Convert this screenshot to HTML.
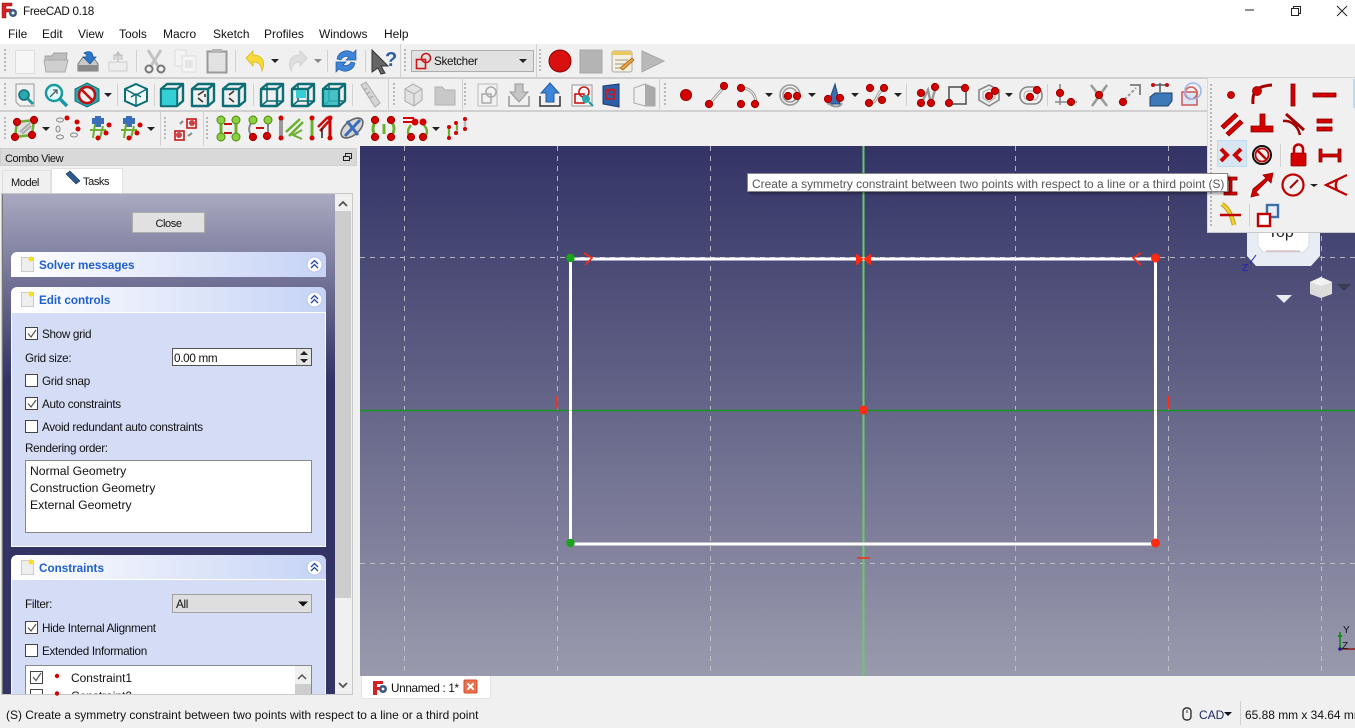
<!DOCTYPE html>
<html><head><meta charset="utf-8"><title>FreeCAD 0.18</title>
<style>
html,body{margin:0;padding:0;width:1355px;height:728px;overflow:hidden;background:#f0f0f0;position:relative;font-family:"Liberation Sans",sans-serif;}
.a{position:absolute;box-sizing:border-box}
.t{position:absolute;white-space:nowrap;font:11.95px/16px "Liberation Sans",sans-serif;color:#111;margin-top:1px}
.s{font-size:11.7px;letter-spacing:-.31px}
.x{font-size:11px;letter-spacing:-.4px}
.h{position:absolute;white-space:nowrap;font:bold 11.7px/16px "Liberation Sans",sans-serif;color:#1f5fd0;margin-top:1px}
.cb{position:absolute;width:13px;height:13px;background:#fff;border:1px solid #444;box-sizing:border-box}
.hd{position:absolute;left:11px;width:315px;height:25px;border-radius:6px 6px 0 0;background:linear-gradient(90deg,#fff 0%,#c6d3f6 100%)}
svg{position:absolute;overflow:visible}
</style></head><body>
<div class="a" style="left:0;top:0;width:1355px;height:44px;background:#fff"></div>
<div class="t s" style="left:23px;top:3px">FreeCAD 0.18</div>
<div class="t" style="left:8px;top:25px">File</div>
<div class="t" style="left:42px;top:25px">Edit</div>
<div class="t" style="left:78px;top:25px">View</div>
<div class="t" style="left:119px;top:25px">Tools</div>
<div class="t" style="left:163px;top:25px">Macro</div>
<div class="t" style="left:213px;top:25px">Sketch</div>
<div class="t" style="left:264px;top:25px">Profiles</div>
<div class="t" style="left:319px;top:25px">Windows</div>
<div class="t" style="left:384px;top:25px">Help</div>

<div class="a" style="left:0;top:77px;width:1355px;height:2px;background:#d0d0d0"></div>
<div class="a" style="left:0;top:110px;width:1207px;height:2px;background:#d0d0d0"></div>

<!-- viewport -->
<div class="a" style="left:360px;top:146px;width:995px;height:530px;background:linear-gradient(180deg,#333366 0%,#9a9aae 100%)"></div>

<svg style="left:0;top:0" width="1355" height="728" viewBox="0 0 1355 728">
<defs>
<g id="rd"><circle r="3.6" fill="#d40000" stroke="#9a0000" stroke-width="1"/></g>
<path id="dn" d="M-4,-2H4L0,2Z" fill="#222"/>
<g id="dots"><path d="M0,0V24" stroke="#b8b8b8" stroke-width="2" stroke-dasharray="2 2"/></g>
<g id="cube" fill="none" stroke="#0e6e76" stroke-width="2.4" stroke-linejoin="round"><path d="M-11,-6L-5,-11H11V6L5,11H-11Z"/><path d="M-11,-6H5V11M5,-6L11,-11"/></g>
<path id="cubeb" d="M-5,-11H11V6M-5,-11V6H11M-5,6L-11,11" fill="none" stroke="#0e6e76" stroke-width="1.6"/>
</defs>

<!-- app icon -->
<g><path d="M2,3H12V6H6V9H11V12H6V18H2Z" fill="#d42020" stroke="#901010" stroke-width=".5"/><circle cx="13" cy="13" r="4" fill="#3a5a80"/><circle cx="13" cy="13" r="1.5" fill="#fff"/></g>

<!-- window buttons -->
<path d="M1245,10H1254" stroke="#222" stroke-width="1"/>
<path d="M1291.5,8.5H1298.5V15.5H1291.5ZM1293.5,8.5V6.5H1300.5V13.5H1298.5" fill="none" stroke="#222"/>
<path d="M1337,6L1347,16M1347,6L1337,16" stroke="#222" stroke-width="1"/>

<!-- toolbar handles -->
<use href="#dots" x="5" y="49"/><use href="#dots" x="5" y="83"/><use href="#dots" x="5" y="117"/>
<use href="#dots" x="405" y="49"/><use href="#dots" x="540" y="49"/><use href="#dots" x="394" y="83"/><use href="#dots" x="465" y="83"/><use href="#dots" x="665" y="83"/><use href="#dots" x="165" y="117"/><use href="#dots" x="207" y="117"/>
<!-- separators -->
<g stroke="#d0d0d0" stroke-width="1">
<path d="M136.5,50V72M235.5,50V72M327.5,50V72M365.5,50V72M400.5,44V77M536.5,44V77"/>
<path d="M117.5,84V106M154.5,84V106M253.5,84V106M352.5,84V106M388.5,78V110M462.5,78V110M659.5,78V110"/>
<path d="M160.5,112V146M203.5,112V146"/>
<path d="M906.5,84V106M1047.5,84V106"/>
<path d="M1207.5,78V232"/>
</g>

<!-- ROW 1 -->
<rect x="15.5" y="50.5" width="19" height="23" rx="1" fill="#f6f6f6" stroke="#dcdcdc"/>
<path d="M45,56H52L54,53H67L65,72H46Z" fill="#bdbdbd" stroke="#a0a0a0"/><path d="M44,60H68L65,72H46Z" fill="#cfcfcf" stroke="#aaa"/>
<path d="M78,64L83,57H93L98,64V71H78Z" fill="#c9c9c9" stroke="#777"/><rect x="78" y="65" width="20" height="6" fill="#8a8a8a"/><path d="M84,53C89,50 93,52 93,57H96L90,64L83,57H87C87,55 86,54 84,53Z" fill="#2d76c9" stroke="#1a4f90" stroke-width=".7"/>
<path d="M109,62H127V71H109Z" fill="#ededed" stroke="#ccc"/><path d="M114,60V55H122V60M118,62V53M115,56L118,52L121,56" fill="#dcdcdc" stroke="#bbb"/>
<path d="M148,50L158,66M161,50L151,66" stroke="#c2c2c2" stroke-width="3"/><circle cx="149" cy="69" r="3.5" fill="none" stroke="#777" stroke-width="2"/><circle cx="161" cy="69" r="3.5" fill="none" stroke="#777" stroke-width="2"/>
<path d="M175,50H186V66H175Z" fill="#f4f4f4" stroke="#ddd"/><path d="M182,56H196V72H182Z" fill="#f4f4f4" stroke="#ddd"/><rect x="185" y="60" width="8" height="8" fill="#e4e4e4"/>
<rect x="207.5" y="51.5" width="19" height="21" fill="#e2e2e2" stroke="#999" stroke-width="2"/><rect x="212" y="49" width="10" height="4" fill="#b5b5b5"/>
<path d="M246,58L253,51V55C262,55 266,61 262,71C261,64 258,62 253,62V66Z" fill="#f6da3a" stroke="#d8b820" stroke-width=".8"/>
<use href="#dn" x="275" y="61"/>
<path d="M307,58L300,51V55C291,55 287,61 291,71C292,64 295,62 300,62V66Z" fill="#dedede" stroke="#ccc" stroke-width=".8"/>
<use href="#dn" x="318" y="61" style="opacity:.5"/>
<path d="M337,59A10,10 0 0 1 353,53L356,50V60H346L349,57A6,6 0 0 0 341,60Z" fill="#3c85d8" stroke="#215a9e" stroke-width=".7"/><path d="M355,63A10,10 0 0 1 339,69L336,72V62H346L343,65A6,6 0 0 0 351,62Z" fill="#3c85d8" stroke="#215a9e" stroke-width=".7"/>
<path d="M372,50L388,66L381,66L385,73L381,74L378,68L372,72Z" fill="#666" stroke="#333"/><text x="385" y="66" font-family="Liberation Sans" font-size="20" font-weight="bold" fill="#2d5f9e">?</text>

<rect x="411.5" y="50.5" width="122" height="21" fill="#e1e1e1" stroke="#adadad"/>
<rect x="416.5" y="59.5" width="9" height="9" fill="none" stroke="#c81818" stroke-width="1.6"/><circle cx="426" cy="58" r="4.5" fill="none" stroke="#c81818" stroke-width="1.6"/>
<use href="#dn" x="523" y="61"/>

<circle cx="560" cy="61" r="11" fill="#d81010" stroke="#8a0000"/>
<rect x="580" y="50" width="22" height="23" fill="#b4b4b4" stroke="#a8a8a8"/>
<rect x="612" y="51" width="20" height="21" rx="2" fill="#f4f0dc" stroke="#aaa"/><rect x="612" y="51" width="20" height="4" fill="#e8c860"/><path d="M615,60H628M615,64H625M615,68H622" stroke="#999"/><path d="M620,68L632,58L634,60L623,70Z" fill="#e8a040" stroke="#a06010" stroke-width=".7"/>
<path d="M642,51L664,61L642,72Z" fill="#b9b9b9" stroke="#a8a8a8"/>

<!-- ROW 2 -->
<path d="M16,84H34V106H20L16,102Z" fill="#f2f2f2" stroke="#999"/><circle cx="24" cy="95" r="5" fill="#2aa8b0" stroke="#0e6e76" stroke-width="1.5"/><path d="M28,99L33,104" stroke="#1a9aa0" stroke-width="3"/>
<circle cx="54" cy="93" r="8" fill="#dff" stroke="#1a9aa0" stroke-width="2.5"/><path d="M50,97L57,90M53,90H57V94" fill="none" stroke="#555" stroke-width="1.3"/><path d="M60,99L67,106" stroke="#1a9aa0" stroke-width="3.5"/>
<path d="M87,83L99,89V101L87,107L75,101V89Z" fill="#2aa8b0" stroke="#0e6e76"/><circle cx="87" cy="95" r="8" fill="#f0f0f0" stroke="#c01010" stroke-width="2.6"/><path d="M82,90L92,100" stroke="#c01010" stroke-width="2.6"/>
<use href="#dn" x="108" y="95"/>
<path d="M136,84L147,89V101L136,106L125,101V89Z" fill="#f0f8f8" stroke="#0e6e76" stroke-width="2"/><path d="M125,89L136,95L147,89M136,95V106M131,97L136,94L141,97" fill="none" stroke="#0e6e76" stroke-width="1.5"/>
<use href="#cube" x="172" y="95"/><path d="M-11,-6H5V11H-11Z" transform="translate(172,95)" fill="#33cfd4"/><path d="M-11,-6H5V11H-11Z" transform="translate(172,95)" fill="none" stroke="#0e6e76" stroke-width="1.6"/>
<use href="#cube" x="203" y="95"/><path d="M198,95L204,91M198,98L203,102M205,97V94" stroke="#333" stroke-width="1.6"/>
<use href="#cube" x="234" y="95"/><path d="M229,95L234,91M229,98L234,102" stroke="#333" stroke-width="1.6"/>
<use href="#cube" x="272" y="95"/><use href="#cubeb" x="272" y="95"/>
<use href="#cube" x="303" y="95"/><use href="#cubeb" x="303" y="95"/><rect x="296" y="90" width="10" height="8" fill="#33cfd4"/>
<use href="#cube" x="334" y="95"/><use href="#cubeb" x="334" y="95"/><rect x="324" y="90" width="14" height="15" fill="#2ab8be" opacity=".85"/>
<path d="M361,85L366,82L380,103L375,107Z" fill="#d6d6d6" stroke="#aaa"/><path d="M364,90L367,88M367,94L370,92M370,98L373,96" stroke="#999"/>
<path d="M405,89L413,84L422,89V100L414,106L405,101Z" fill="#e2e2e2" stroke="#aaa"/><path d="M405,89L414,94V106M414,94L422,89" fill="none" stroke="#aaa"/>
<path d="M435,87H442L445,90H455V105H435Z" fill="#c8c8c8" stroke="#b0b0b0"/>
<path d="M478,84H497V106H478Z" fill="#f2f2f2" stroke="#bbb"/><rect x="482" y="94" width="9" height="9" fill="none" stroke="#aaa" stroke-width="1.5"/><circle cx="491" cy="92" r="5" fill="none" stroke="#aaa" stroke-width="1.5"/>
<path d="M509,96V106H529V96" fill="none" stroke="#999" stroke-width="1.5"/><path d="M515,84H523V92H528L519,102L510,92H515Z" fill="#c4c4c4" stroke="#999"/>
<path d="M540,96V106H560V96" fill="none" stroke="#333" stroke-width="1.5"/><path d="M546,102H554V93H559L550,83L541,93H546Z" fill="#3c85d8" stroke="#215a9e"/>
<rect x="572" y="85" width="20" height="21" fill="#f6f6f6" stroke="#999"/><rect x="575" y="94" width="9" height="9" fill="none" stroke="#c81818" stroke-width="1.6"/><circle cx="584" cy="92" r="5" fill="none" stroke="#c81818" stroke-width="1.6"/><circle cx="586" cy="99" r="4" fill="#2aa8b0"/><path d="M589,102L593,106" stroke="#1a9aa0" stroke-width="2"/>
<path d="M603,86L619,84V107L603,104Z" fill="#2d5fa8" stroke="#1a3a70"/><rect x="606" y="90" width="8" height="9" fill="none" stroke="#c81818" stroke-width="1.6"/><circle cx="612" cy="92" r="3" fill="none" stroke="#c81818" stroke-width="1.3"/>
<path d="M634,88L645,84L655,88V106L645,106L634,103Z" fill="#f0f0f0" stroke="#aaa"/><path d="M645,84L655,88V106H645Z" fill="#aaa"/>

<!-- sketch tools -->
<circle cx="686" cy="95" r="5.5" fill="#d40000" stroke="#9a0000"/>
<path d="M709,104L725,86" stroke="#999" stroke-width="3"/><path d="M709,104L725,86" stroke="#f4f4f4" stroke-width="1"/><use href="#rd" x="709" y="104"/><use href="#rd" x="724" y="86"/>
<path d="M741,88C752,88 756,96 756,104" fill="none" stroke="#999" stroke-width="3"/><path d="M741,88C752,88 756,96 756,104" fill="none" stroke="#f4f4f4"/><use href="#rd" x="741" y="88"/><use href="#rd" x="741" y="104"/><use href="#rd" x="755" y="104"/><use href="#dn" x="769" y="95"/>
<circle cx="790" cy="95" r="10" fill="none" stroke="#999" stroke-width="1.6"/><circle cx="790" cy="95" r="7" fill="none" stroke="#999" stroke-width="1.6"/><use href="#rd" x="788" y="96"/><use href="#rd" x="797" y="96"/><use href="#dn" x="812" y="95"/>
<path d="M828,104L835,84L840,104Z" fill="#3a6eb0" stroke="#1f4478"/><path d="M826,101C832,108 840,108 842,103" fill="none" stroke="#999" stroke-width="2"/><use href="#rd" x="828" y="99"/><use href="#rd" x="840" y="98"/><use href="#dn" x="855" y="95"/>
<path d="M870,103C878,103 876,92 884,89" fill="none" stroke="#999" stroke-width="3"/><path d="M870,103C878,103 876,92 884,89" fill="none" stroke="#f4f4f4"/><use href="#rd" x="870" y="88"/><use href="#rd" x="884" y="88"/><use href="#rd" x="869" y="103"/><use href="#rd" x="882" y="100"/><use href="#dn" x="898" y="95"/>
<path d="M921,104L928,90L931,104L936,86" fill="none" stroke="#999" stroke-width="2.5"/><use href="#rd" x="921" y="103"/><use href="#rd" x="921" y="93"/><use href="#rd" x="931" y="103"/><use href="#rd" x="935" y="87"/>
<rect x="949" y="87" width="17" height="17" fill="none" stroke="#555" stroke-width="1.6"/><use href="#rd" x="949" y="103"/><use href="#rd" x="965" y="88"/>
<path d="M989,85L999,90V100L989,106L979,100V90Z" fill="none" stroke="#888" stroke-width="1.6"/><path d="M989,89L995,92V98L989,102L983,98V92Z" fill="none" stroke="#aaa"/><use href="#rd" x="995" y="91"/><use href="#rd" x="989" y="96"/><use href="#dn" x="1009" y="95"/>
<rect x="1020" y="87" width="22" height="17" rx="8" fill="none" stroke="#888" stroke-width="1.6"/><rect x="1024" y="91" width="14" height="9" rx="4" fill="none" stroke="#aaa"/><use href="#rd" x="1030" y="97"/><use href="#rd" x="1037" y="90"/>
<path d="M1060,84V105M1055,102H1077" stroke="#888" stroke-width="1.6" fill="none"/><use href="#rd" x="1060" y="93"/><use href="#rd" x="1071" y="102"/>
<path d="M1091,85L1107,106M1107,85L1092,106" stroke="#999" stroke-width="2.5"/><use href="#rd" x="1099" y="95"/>
<path d="M1121,103L1136,88" stroke="#999" stroke-width="2" stroke-dasharray="3 2"/><path d="M1130,85H1140V95" fill="none" stroke="#888" stroke-width="2"/><use href="#rd" x="1123" y="102"/>
<path d="M1150,97L1155,93H1172V101L1168,106H1150Z" fill="#3d78b8" stroke="#1d3f6e"/><path d="M1160,83V92" stroke="#555" stroke-width="1.5"/><path d="M1153,85H1167" stroke="#555" stroke-width="1.5"/><circle cx="1153" cy="85" r="2" fill="#c01010"/><circle cx="1167" cy="85" r="2" fill="#c01010"/>
<rect x="1182" y="92" width="15" height="13" fill="#dde6f4" stroke="#d06060" stroke-width="1.6"/><circle cx="1191" cy="93" r="6" fill="none" stroke="#d06060" stroke-width="1.6"/><circle cx="1193" cy="91" r="8" fill="none" stroke="#9db9e8" stroke-width="1.6"/>

<!-- ROW 3 -->
<path d="M17,122L34,120L32,135L15,137Z" fill="#e0e0e0" stroke="#6cb030" stroke-width="2.5"/><path d="M20,132L30,123M22,134L31,126" stroke="#aaa" stroke-width="2"/><use href="#rd" x="15" y="137"/><use href="#rd" x="17" y="122"/><use href="#rd" x="34" y="120"/><use href="#rd" x="32" y="135"/>
<use href="#dn" x="46" y="129"/>
<g fill="#eee" stroke="#888"><ellipse cx="60" cy="120" rx="3.5" ry="2"/><ellipse cx="60" cy="137" rx="3.5" ry="2"/><ellipse cx="74" cy="135" rx="3.5" ry="2"/><ellipse cx="58" cy="129" rx="2" ry="3"/></g><g fill="#d40000"><circle cx="67" cy="118" r="2.5"/><circle cx="77" cy="122" r="2.5"/><circle cx="78" cy="129" r="2.5"/></g>
<path d="M92,121H104" stroke="#3a6eb8" stroke-width="6"/><path d="M98,116V127" stroke="#3a6eb8" stroke-width="6"/><path d="M90,130H106M95,124L93,138M103,126L100,138" stroke="#6cb030" stroke-width="2"/><circle cx="109" cy="125" r="2.5" fill="#d40000"/><circle cx="106" cy="133" r="2.5" fill="#d40000"/><circle cx="98" cy="138" r="2.5" fill="#d40000"/>
<path d="M123,121H135" stroke="#3a6eb8" stroke-width="6"/><path d="M129,116V127" stroke="#3a6eb8" stroke-width="6"/><path d="M121,130H137M126,124L124,138M134,126L131,138" stroke="#6cb030" stroke-width="2"/><circle cx="140" cy="125" r="2.5" fill="#d40000"/><circle cx="137" cy="133" r="2.5" fill="#d40000"/><circle cx="129" cy="138" r="2.5" fill="#d40000"/>
<use href="#dn" x="151" y="129"/>
<rect x="175" y="131" width="9" height="9" fill="none" stroke="#c81818" stroke-width="1.6"/><rect x="187" y="119" width="9" height="9" fill="none" stroke="#c81818" stroke-width="1.6"/><circle cx="179" cy="135" r="3" fill="#d04040"/><circle cx="192" cy="123" r="3" fill="#d04040"/><path d="M180,124L183,121M188,136L192,133" stroke="#888" stroke-width="2"/>

<path d="M221,120V137M236,120V137" stroke="#6cb030" stroke-width="3"/><path d="M224,124H232M224,133H232" stroke="#c01010" stroke-width="2"/><circle cx="221" cy="120" r="4" fill="#8ad040" stroke="#4f8a10"/><circle cx="236" cy="120" r="4" fill="#8ad040" stroke="#4f8a10"/><circle cx="221" cy="137" r="4" fill="#8ad040" stroke="#4f8a10"/><circle cx="236" cy="137" r="4" fill="#8ad040" stroke="#4f8a10"/>
<path d="M253,120C248,127 248,131 252,137M268,120V137" fill="none" stroke="#888" stroke-width="2"/><path d="M256,128H264" stroke="#c01010" stroke-width="2"/><circle cx="253" cy="120" r="4" fill="#8ad040" stroke="#4f8a10"/><circle cx="268" cy="120" r="4" fill="#8ad040" stroke="#4f8a10"/><use href="#rd" x="253" y="137"/><use href="#rd" x="267" y="136"/>
<path d="M281,118V139" stroke="#999" stroke-width="4"/><path d="M286,132L300,119M289,136L303,122" stroke="#6cb030" stroke-width="2.5"/><path d="M302,130L293,135L302,139" fill="none" stroke="#6cb030" stroke-width="2"/><circle cx="281" cy="118" r="2.5" fill="#d40000"/><circle cx="281" cy="138" r="2.5" fill="#d40000"/>
<path d="M312,118V138" stroke="#6cb030" stroke-width="3"/><path d="M330,118V138" stroke="#d40000" stroke-width="3"/><path d="M318,127L328,117M320,131L329,121" stroke="#c01010" stroke-width="2.5"/><path d="M322,128V138" stroke="#222" stroke-width="1.5"/><circle cx="312" cy="118" r="2.5" fill="#d40000"/><circle cx="312" cy="138" r="2.5" fill="#d40000"/><circle cx="330" cy="118" r="2.5" fill="#d40000"/><circle cx="330" cy="138" r="2.5" fill="#d40000"/>
<ellipse cx="352" cy="128" rx="13" ry="7" transform="rotate(-40 352 128)" fill="#d8d8d8" stroke="#666" stroke-width="1.6"/><path d="M345,136L360,120M347,121L358,135" stroke="#3a6eb8" stroke-width="3"/>
<path d="M376,120C372,127 372,131 376,137M391,120C395,127 395,131 391,137" fill="none" stroke="#6cb030" stroke-width="3"/><path d="M384,124V134" stroke="#6cb030" stroke-width="3"/><use href="#rd" x="375" y="120"/><use href="#rd" x="375" y="137"/><use href="#rd" x="391" y="120"/><use href="#rd" x="391" y="137"/>
<path d="M403,118H414M403,122H414" stroke="#d40000" stroke-width="2"/><path d="M411,125C407,130 407,134 411,138M424,125C428,130 428,134 424,138" fill="none" stroke="#6cb030" stroke-width="2.5"/><use href="#rd" x="411" y="137"/><use href="#rd" x="423" y="137"/><circle cx="415" cy="122" r="3.5" fill="#d40000"/><circle cx="423" cy="122" r="3.5" fill="#d40000"/>
<use href="#dn" x="436" y="129"/>
<path d="M449,128V138M457,125V134M465,120V130" stroke="#bbb" stroke-width="2.5"/><path d="M449,128V138M457,125V130" stroke="#6cb030" stroke-width="2"/><g fill="#d40000"><circle cx="449" cy="127" r="2"/><circle cx="449" cy="138" r="2"/><circle cx="456" cy="123" r="2"/><circle cx="456" cy="133" r="2"/><circle cx="465" cy="119" r="2"/><circle cx="465" cy="129" r="2"/></g>

<!-- 3D scene -->
<g stroke="#c8c8cc" stroke-width="1" stroke-dasharray="5 5" opacity=".85">
<path d="M404.5,146V676M557.5,146V676M710.5,146V676M1015.5,146V676M1168.5,146V676M1321.5,146V676"/>
<path d="M360,257.500H1355M360,563.500H1355"/>
</g>
<path d="M360,410.500H1355" stroke="#15951f" stroke-width="1.5"/>
<path d="M863.500,146V676" stroke="#66cc66" stroke-width="2"/>
<rect x="570.500" y="259" width="585" height="285" fill="none" stroke="#fff" stroke-width="3"/>
<circle cx="570.500" cy="258" r="4.200" fill="#19a519"/><circle cx="570.500" cy="543" r="4.200" fill="#19a519"/>
<g fill="#ff2a10"><circle cx="1155.500" cy="258" r="4.500"/><circle cx="1155.500" cy="543" r="4.500"/><circle cx="863.500" cy="410" r="4.500"/></g>
<g fill="none" stroke="#ff2a10" stroke-width="1.600">
<path d="M584,253L592,258L585,265M1141,253L1133,258L1141,265"/>
<path d="M557,396V409M1168.500,396V409M857,558H870"/>
</g>
<path d="M857,254L861,259L857,265L856,265V254ZM870,254L866,259L870,265L871,265V254Z" fill="#ff2a10"/>
<path d="M858,256L862,259L858,263M869,256L865,259L869,263" fill="none" stroke="#ff2a10" stroke-width="2"/>

<!-- nav cube -->
<path d="M1247,232H1320V256L1311,266H1256L1247,256Z" fill="#e8ecf3"/>
<path d="M1258,232V246L1263,252H1304L1309,246V232Z" fill="#fff" stroke="#d8dce4"/>
<path d="M1266,251H1300" stroke="#d4a8a8"/>
<text x="1268" y="237" font-family="Liberation Sans" font-size="16" fill="#222">Top</text>
<path d="M1250,263L1256,255" stroke="#2020c8"/><text x="1242" y="271" font-family="Liberation Sans" font-size="10" fill="#2020c8">Z</text>
<path d="M1310,282L1321,277L1332,282V294L1321,298L1310,294Z" fill="#dcdcdc"/><path d="M1310,282L1321,286L1332,282L1321,277Z" fill="#f2f2f2"/>
<path d="M1276,295H1292L1284,303Z" fill="#e8ecf3"/>
<path d="M1337,284H1351L1344,291Z" fill="#3a3a52"/>

<!-- axis cross -->
<path d="M1340,649V632" stroke="#148a14" stroke-width="1.600"/><path d="M1338,636H1342" stroke="#148a14" stroke-width="2"/><path d="M1340,649H1355" stroke="#8a2020" stroke-width="1.600"/><circle cx="1340" cy="649" r="1.800" fill="#1a1a8a"/>
<text x="1343" y="633" font-family="Liberation Sans" font-size="10" fill="#111">Y</text><text x="1342" y="649" font-family="Liberation Sans" font-size="10" fill="#111">Z</text>
</svg>

<div class="t s" style="left:434px;top:53px">Sketcher</div>

<!-- palette -->
<div class="a" style="left:1207px;top:78px;width:148px;height:155px;background:#f0f0f0;border-left:1px solid #d8d8d8;border-bottom:1px solid #c8c8c8"></div>
<div class="a" style="left:1217px;top:140px;width:30px;height:27px;background:#d8e6f2;border:1px solid #bcdcf4"></div>
<div class="a" style="left:1353px;top:79px;width:2px;height:29px;background:#bcdcf4"></div>
<svg style="left:0;top:0" width="1355" height="728" viewBox="0 0 1355 728">
<path d="M1211,84V226" stroke="#b8b8b8" stroke-width="2" stroke-dasharray="2 2"/>
<path d="M1280.500,144V167M1249.500,204V226" stroke="#d0d0d0"/>
<g fill="#d40000" stroke="#8a0000" stroke-width=".8">
<circle cx="1231" cy="95" r="3.500"/>
<path d="M1253,104C1252,92 1256,86 1272,85" fill="none" stroke="#a00000" stroke-width="3"/><circle cx="1257" cy="91" r="4.500"/>
<rect x="1291" y="84" width="4" height="22"/>
<rect x="1313" y="93" width="23" height="4"/>
<path d="M1221,126L1235,113L1238,116L1224,129ZM1226,133L1240,120L1243,123L1229,136Z"/>
<path d="M1260,114H1265V126H1273V132H1251V126H1260Z"/>
<path d="M1283,121C1291,120 1298,126 1300,135" fill="none" stroke="#a00000" stroke-width="2.500"/><path d="M1286,114L1304,130" stroke="#a00000" stroke-width="3" fill="none"/>
<rect x="1317" y="119" width="15" height="4"/><rect x="1317" y="127" width="15" height="4"/>
<rect x="1291" y="153" width="15" height="13" rx="1"/><path d="M1294,153V149A4.500,4.500 0 0 1 1303,149V153" fill="none" stroke="#c00000" stroke-width="2.500"/>
<path d="M1319,149H1322V154H1338V149H1341V162H1338V157H1322V162H1319Z"/>
<path d="M1224,177H1237V180H1232V192H1237V195H1224V192H1229V180H1224Z"/>
<path d="M1251,197L1253,189L1266,178L1263,175L1273,173L1271,183L1268,180L1256,192L1259,195Z"/>
</g>
<path d="M1221,149L1227,155L1221,161M1241,149L1235,155L1241,161" fill="none" stroke="#c80000" stroke-width="4"/>
<circle cx="1262" cy="155" r="9" fill="#f0f0f0" stroke="#111" stroke-width="2"/><circle cx="1262" cy="155" r="6.500" fill="#f0f0f0" stroke="#c00000" stroke-width="1.800"/><path d="M1257,150L1267,160" stroke="#c00000" stroke-width="2.500"/>
<circle cx="1293" cy="185" r="10.500" fill="none" stroke="#c00000" stroke-width="2.200"/><path d="M1290,188L1298,180" stroke="#a00000" stroke-width="2"/>
<path d="M1310,184H1318L1314,187Z" fill="#222"/>
<path d="M1347,175L1326,185L1347,195M1338,179C1335,184 1335,187 1338,191" fill="none" stroke="#c00000" stroke-width="2.200"/>
<path d="M1222,204C1228,208 1232,216 1234,225" fill="none" stroke="#c0a010" stroke-width="4.500"/><path d="M1222,204C1228,208 1232,216 1234,225" fill="none" stroke="#f2d230" stroke-width="2.500"/><path d="M1220,215H1241" stroke="#c00000" stroke-width="2.500"/>
<rect x="1267" y="205" width="11" height="12" fill="#e8eef8" stroke="#3d6ea8" stroke-width="2.400"/><rect x="1258" y="214" width="12" height="12" fill="#fff" stroke="#c00000" stroke-width="2.400"/>
</svg>

<!-- tooltip -->
<div class="a" style="left:747px;top:173px;width:481px;height:19px;background:#fff;border:1px solid #888;box-shadow:2px 2px 2px rgba(0,0,0,.35)"></div>
<div class="t" style="left:752px;top:175px;color:#555">Create a symmetry constraint between two points with respect to a line or a third point (S)</div>

<!-- combo view -->
<div class="a" style="left:0;top:148px;width:357px;height:18px;background:#d9d9d9;border:1px solid #cfcfcf"></div>
<div class="t x" style="left:5px;top:150px">Combo View</div>
<svg style="left:0;top:0" width="360" height="200" viewBox="0 0 360 200"><path d="M343.500,156.500H349.500V160.500H343.500ZM345.500,156.500V153.500H351.500V158.500H349.500" fill="none" stroke="#222"/>
</svg>
<div class="a" style="left:2px;top:170px;width:49px;height:23px;background:#f0f0f0;border:1px solid #e0e0e0;border-bottom:none"></div>
<div class="t x" style="left:11px;top:174px">Model</div>
<div class="a" style="left:51px;top:168px;width:72px;height:25px;background:#fff;border:1px solid #e0e0e0;border-bottom:none"></div>
<svg style="left:0;top:0" width="130" height="200" viewBox="0 0 130 200"><path d="M66,174L70,171L80,181L76,184Z" fill="#2d5a90" stroke="#1a3a60" stroke-width=".6"/></svg>
<div class="t x" style="left:83px;top:173px">Tasks</div>

<div class="a" style="left:1px;top:193px;width:352px;height:502px;background:#f6f6f6;border:1px solid #c8c8c8"></div>
<div class="a" style="left:2px;top:194px;width:333px;height:500px;border-left:1px solid #777;background:linear-gradient(180deg,#a9a9c0 0,#333366 186px,#333366 100%)"></div>

<!-- scrollbar -->
<div class="a" style="left:335px;top:194px;width:17px;height:500px;background:#f0f0f0"></div>
<div class="a" style="left:335px;top:211px;width:16px;height:387px;background:#cdcdcd"></div>
<svg style="left:0;top:0" width="360" height="700" viewBox="0 0 360 700"><path d="M339,206L343,202L347,206M339,683L343,687L347,683" fill="none" stroke="#555" stroke-width="1.800"/></svg>

<!-- Close -->
<div class="a" style="left:132px;top:212px;width:73px;height:21px;background:#e1e1e1;border:1px solid #adadad"></div>
<div class="t x" style="left:132px;top:215px;width:73px;text-align:center">Close</div>

<!-- solver -->
<div class="hd" style="top:252px"></div>
<div class="h" style="left:39px;top:257px">Solver messages</div>
<!-- edit controls -->
<div class="hd" style="top:287px"></div>
<div class="a" style="left:11px;top:312px;width:315px;height:235px;background:#d5dcf6;border:1px solid #fff"></div>
<div class="h" style="left:39px;top:292px">Edit controls</div>
<!-- constraints -->
<div class="hd" style="top:555px"></div>
<div class="a" style="left:11px;top:579px;width:315px;height:115px;background:#d5dcf6;border-left:1px solid #fff;border-right:1px solid #fff;border-top:1px solid #fff"></div>
<div class="h" style="left:39px;top:560px">Constraints</div>

<svg style="left:0;top:0" width="360" height="700" viewBox="0 0 360 700">
<rect x="21.500" y="257.500" width="12" height="14" fill="#eee" stroke="#ccc"/><circle cx="31" cy="259" r="2.500" fill="#f4e020"/>
<rect x="21.500" y="292.500" width="12" height="14" fill="#eee" stroke="#ccc"/><circle cx="31" cy="294" r="2.500" fill="#f4e020"/>
<rect x="21.500" y="560.500" width="12" height="14" fill="#eee" stroke="#ccc"/><circle cx="31" cy="562" r="2.500" fill="#f4e020"/>
<g fill="#fff" stroke="#b8c4e4"><circle cx="314.500" cy="264.500" r="7.500"/><circle cx="314.500" cy="299.500" r="7.500"/><circle cx="314.500" cy="567.500" r="7.500"/></g>
<g fill="none" stroke="#1f45a8" stroke-width="1.300"><path d="M311,264L314.500,260.500L318,264M311,268L314.500,264.500L318,268"/><path d="M311,299L314.500,295.500L318,299M311,303L314.500,299.500L318,303"/><path d="M311,567L314.500,563.500L318,567M311,571L314.500,567.500L318,571"/></g>
</svg>

<div class="cb" style="left:25px;top:327px"></div><div class="t s" style="left:42px;top:326px">Show grid</div>
<div class="t s" style="left:25px;top:350px">Grid size:</div>
<div class="a" style="left:172px;top:348px;width:140px;height:18px;background:#fff;border:1px solid #555"></div>
<div class="t s" style="left:174px;top:350px">0.00 mm</div>
<div class="a" style="left:296px;top:349px;width:15px;height:16px;background:#e4e4e4;border-left:1px solid #ccc"></div>
<div class="cb" style="left:25px;top:374px"></div><div class="t s" style="left:42px;top:373px">Grid snap</div>
<div class="cb" style="left:25px;top:397px"></div><div class="t s" style="left:42px;top:396px">Auto constraints</div>
<div class="cb" style="left:25px;top:420px"></div><div class="t s" style="left:42px;top:419px">Avoid redundant auto constraints</div>
<div class="t s" style="left:25px;top:440px">Rendering order:</div>
<div class="a" style="left:25px;top:460px;width:287px;height:73px;background:#fff;border:1px solid #888"></div>
<div class="t" style="left:30px;top:462px;font-size:12.2px">Normal Geometry</div>
<div class="t" style="left:30px;top:479px;font-size:12.2px">Construction Geometry</div>
<div class="t" style="left:30px;top:496px;font-size:12.2px">External Geometry</div>

<div class="t s" style="left:25px;top:596px">Filter:</div>
<div class="a" style="left:172px;top:594px;width:140px;height:19px;background:#dedede;border:1px solid #a0a0a0"></div>
<div class="t s" style="left:176px;top:596px">All</div>
<div class="cb" style="left:25px;top:621px"></div><div class="t s" style="left:42px;top:620px">Hide Internal Alignment</div>
<div class="cb" style="left:25px;top:644px"></div><div class="t s" style="left:42px;top:643px">Extended Information</div>
<div class="a" style="left:25px;top:665px;width:287px;height:29px;background:#fff;border:1px solid #888;border-bottom:none;overflow:hidden">
 <div class="cb" style="left:4px;top:5px"></div><div class="t" style="left:45px;top:3px">Constraint1</div>
 <div class="cb" style="left:4px;top:23px"></div><div class="t" style="left:45px;top:21px">Constraint2</div>
 <div class="a" style="left:269px;top:0;width:16px;height:29px;background:#f0f0f0"></div>
 <div class="a" style="left:269px;top:18px;width:16px;height:11px;background:#cdcdcd"></div>
</div>

<svg style="left:0;top:0" width="360" height="700" viewBox="0 0 360 700">
<g fill="none" stroke="#555" stroke-width="1.200"><path d="M28,333.500L31,337L36,330M28,403.500L31,407L36,400M28,627.500L31,631L36,624M33,677L36,680.500L41,673"/></g>
<path d="M300,355L304,351L308,355ZM300,359H308L304,363Z" fill="#222"/>
<path d="M298,601.500H308L303,606.500Z" fill="#111"/>
<path d="M298,679L302,675L306,679" fill="none" stroke="#555" stroke-width="1.500"/>
<circle cx="57" cy="676" r="2.200" fill="#d40000"/><circle cx="57" cy="693.500" r="2.200" fill="#d40000"/>
</svg>

<!-- bottom tab -->
<div class="a" style="left:361px;top:676px;width:130px;height:23px;background:#fff;border:1px solid #e4e4e4;border-top:none"></div>
<svg style="left:0;top:0" width="500" height="700" viewBox="0 0 500 700">
<path d="M373,681H383V684H377V687H382V690H377V695H373Z" fill="#d42020"/><circle cx="383" cy="689" r="4" fill="#3a5a80"/><circle cx="383" cy="689" r="1.400" fill="#fff"/>
<rect x="464" y="680" width="13" height="13" rx="1" fill="#e8704a" stroke="#d05030"/><path d="M467.500,683.500L473.500,689.500M473.500,683.500L467.500,689.500" stroke="#fff" stroke-width="2"/>
</svg>
<div class="t s" style="left:391px;top:680px">Unnamed : 1*</div>

<!-- status -->
<div class="t" style="left:6px;top:706px">(S) Create a symmetry constraint between two points with respect to a line or a third point</div>
<svg style="left:0;top:0" width="1355" height="728" viewBox="0 0 1355 728">
<rect x="1183" y="708" width="8" height="12" rx="3.500" fill="none" stroke="#333" stroke-width="1.400"/><path d="M1187,710V713" stroke="#333"/>
<path d="M1224,712H1232L1228,716Z" fill="#111"/>
<path d="M1240.500,701V725" stroke="#d0d0d0"/>
</svg>
<div class="t" style="left:1199px;top:706px;color:#1a2a60">CAD</div>
<div class="t" style="left:1245px;top:706px">65.88 mm x 34.64 mm</div>
</body></html>
